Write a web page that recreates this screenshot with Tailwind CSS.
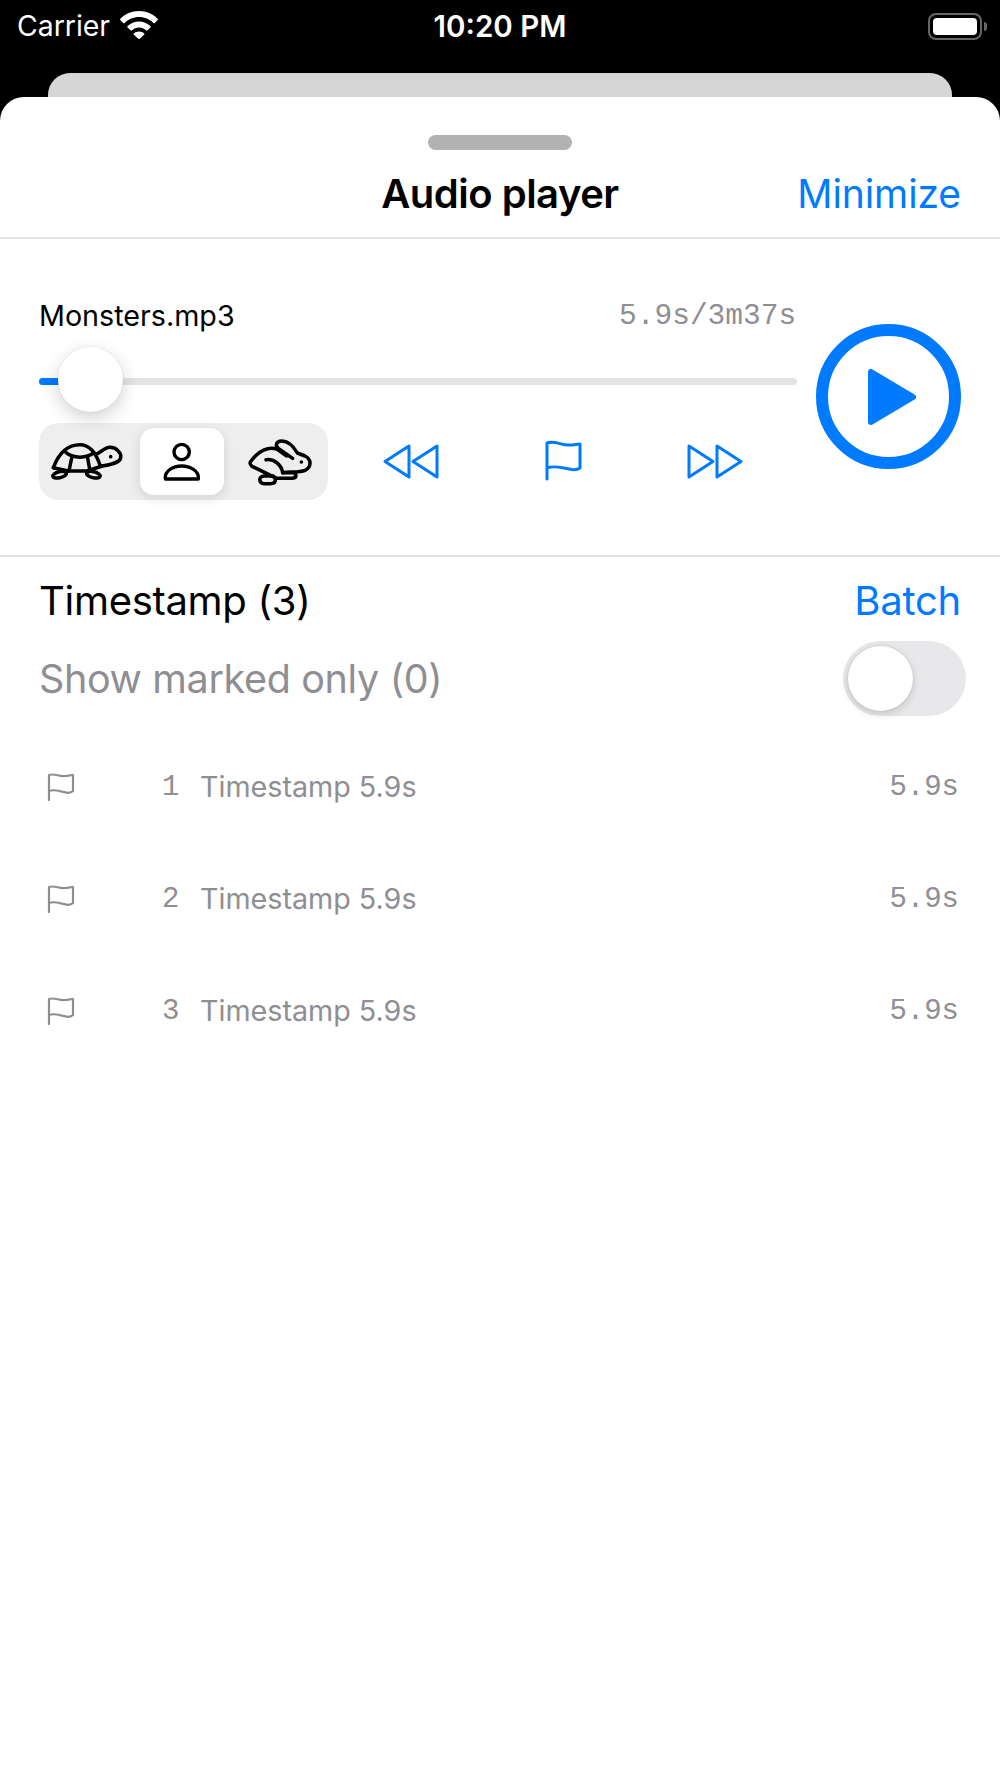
<!doctype html>
<html lang="en">
<head>
<meta charset="utf-8">
<title>Audio player</title>
<script src="https://cdn.jsdelivr.net/npm/@tailwindcss/browser@4"></script>
</head>
<body class="bg-black font-['Inter','Liberation_Sans',sans-serif]">
<div class="w-[1000px] h-[1778px] flex flex-col overflow-hidden bg-black">
  <div class="h-[97px] shrink-0 flex flex-col">
    <div class="h-[52px] flex items-center justify-between pl-[17px] pr-[13px] text-white relative">
      <div class="flex items-center gap-[10px]">
        <span class="text-[28.400px] leading-[52px]">Carrier</span>
        <svg class="w-[38px] h-[28px] mt-[-2px]" viewBox="0 0 38 28" fill="#fff"><path d="M19 0C11.6 0 5 3 .4 7.7a1 1 0 0 0 0 1.4l2.8 2.8a1 1 0 0 0 1.4 0C8.3 8.300 13.400 6 19 6s10.700 2.300 14.400 5.900a1 1 0 0 0 1.400 0l2.800-2.800a1 1 0 0 0 0-1.400C33 3 26.400 0 19 0Z"/><path d="M19 10.500c-4.400 0-8.400 1.700-11.400 4.600a1 1 0 0 0 0 1.400l2.900 2.800a1 1 0 0 0 1.400 0c1.900-1.700 4.400-2.800 7.100-2.800s5.200 1.100 7.100 2.800a1 1 0 0 0 1.400 0l2.900-2.800a1 1 0 0 0 0-1.400c-3-2.900-7-4.600-11.400-4.600Z"/><path d="M19 20.500c-2 0-3.800.7-5.100 1.900a1 1 0 0 0 0 1.400l4.400 4a1 1 0 0 0 1.400 0l4.400-4a1 1 0 0 0 0-1.400c-1.300-1.200-3.100-1.900-5.100-1.900Z"/></svg>
      </div>
      <span class="absolute left-[400px] w-[200px] text-center text-[29.500px] font-semibold leading-[54px] whitespace-nowrap">10:20 PM</span>
      <div class="flex items-center gap-[2px]">
        <div class="w-[54px] h-[27px] rounded-[8px] border-2 border-white/40 p-[3px]"><div class="h-full bg-white rounded-[4px]"></div></div>
        <div class="w-[3px] h-[9px] rounded-r-full bg-white/40"></div>
      </div>
    </div>
    <div class="mt-[21px] mx-[48px] h-[24px] bg-[#d6d6d6] rounded-t-[22px]"></div>
  </div>

  <div class="flex-1 bg-white rounded-t-[24px] flex flex-col">
    <div class="pt-[38px] flex justify-center"><div class="w-[144px] h-[15px] rounded-full bg-[#b2b2b2]"></div></div>
    <div class="h-[87px] grid grid-cols-[1fr_auto_1fr] items-center pl-[39px] pr-[39px] pt-[1px]">
      <div></div>
      <div class="text-[40px] font-semibold text-black tracking-[-0.5px]">Audio player</div>
      <div class="text-right text-[39px] text-[#007aff] tracking-[-0.1px]">Minimize</div>
    </div>
    <div class="h-[2px] bg-[#e3e3e5]"></div>

    <div class="h-[318px] flex pl-[39px] pr-[39px] border-b-2 border-[#e3e3e5]">
      <div class="w-[759px] flex flex-col">
        <div class="flex justify-between items-center pt-[57px] h-[96px] pr-[1px]">
          <span class="text-[28.700px] text-black">Monsters.mp3</span>
          <span class="relative top-[1px] text-[29.500px] text-[#8e8e93] font-['Liberation_Mono',monospace]">5.9s/3m37s</span>
        </div>
        <div class="relative h-[7px] mt-[43px] rounded-full bg-[#e4e4e6]">
          <div class="h-full w-[24px] rounded-l-full bg-[#007aff]"></div>
          <div class="absolute left-[19px] top-[-31px] w-[65px] h-[65px] rounded-full bg-white shadow-[0_6px_18px_rgba(0,0,0,0.18),0_0_2px_rgba(0,0,0,0.1)]"></div>
        </div>
        <div class="mt-[38px] flex items-center">
          <div class="w-[289px] h-[77px] rounded-[20px] bg-[#eeeeef] flex items-center">
            <div class="w-[101px] pl-[6px]">
              <svg class="block w-[80px] h-[50px] mt-[-2px]" viewBox="0 0 240 150" fill="none" stroke="#000" stroke-width="10.500" stroke-linecap="round" stroke-linejoin="round">
                <path d="M25 95C38 60 62 26 105 26C137 26 155 56 166 90"/>
                <path d="M25 95L70 105H125L172 90"/>
                <path d="M152 55C165 52 178 34 195 34C215 34 230 52 227 66C223 82 195 86 172 90"/>
                <path d="M63 50C85 68 125 68 147 50M80 66L72 105M128 66L135 105"/>
                <ellipse cx="44" cy="116" rx="21" ry="9" transform="rotate(-14 44 116)"/>
                <ellipse cx="145" cy="116" rx="21" ry="9" transform="rotate(14 145 116)"/>
                <circle cx="197" cy="62" r="5.500" fill="#000" stroke="none"/>
              </svg>
            </div>
            <div class="w-[84px] h-[67px] rounded-[14px] bg-white shadow-[0_3px_12px_rgba(0,0,0,0.12)] flex items-center justify-center">
              <svg class="w-[38px] h-[42px]" viewBox="432 305 114 126" fill="none" stroke="#000" stroke-width="10" stroke-linejoin="round">
                <circle cx="488" cy="338" r="23"/>
                <path d="M439 419C436 395 462 380 488 380C514 380 541 395 538 419Z"/>
              </svg>
            </div>
            <div class="w-[104px] pl-[16px]">
              <svg class="block w-[80px] h-[60px] mt-[-2px]" viewBox="0 0 240 180" fill="none" stroke="#000" stroke-width="10.500" stroke-linecap="round" stroke-linejoin="round">
                <path d="M112 55C85 45 55 60 35 88C27 95 30 100 36 106L75 125L110 142H155C172 142 172 125 155 125H128C125 105 105 82 78 86"/>
                <path d="M128 125C150 122 180 125 195 118C215 108 215 85 195 75L172 66C160 45 145 30 125 30C108 30 105 45 115 52L158 82"/>
                <path d="M112 55L140 75"/>
                <path d="M100 135H72C55 135 55 158 72 158H92C108 158 110 145 100 135"/>
                <circle cx="184" cy="93" r="5.500" fill="#000" stroke="none"/>
              </svg>
            </div>
          </div>
          <div class="ml-[55px] w-[57px] flex justify-center">
            <svg class="w-[57px] h-[35px] mt-[-1px]" viewBox="0 0 57 35" fill="none" stroke="#007aff" stroke-width="3" stroke-linejoin="round"><path d="M26 2V33L2 17.500Z"/><path d="M54 2V33L30 17.500Z"/></svg>
          </div>
          <div class="ml-[103px] w-[40px] flex justify-center">
            <svg class="w-[37px] h-[41px] mt-[-2px]" viewBox="0 0 37 41" fill="none" stroke="#007aff" stroke-width="3" stroke-linecap="round" stroke-linejoin="round"><path d="M2 39V3C10 0 17 6 25 5C29 5 32 4 35 4V28C32 30 28 30 24 29C17 28 9 25 2 28"/></svg>
          </div>
          <div class="ml-[103px] w-[57px] flex justify-center">
            <svg class="w-[57px] h-[35px] mt-[-1px]" viewBox="0 0 57 35" fill="none" stroke="#007aff" stroke-width="3" stroke-linejoin="round"><path d="M3 2V33L27 17.500Z"/><path d="M31 2V33L55 17.500Z"/></svg>
          </div>
        </div>
      </div>
      <div class="ml-[19px] mt-[85px] w-[145px] h-[145px] rounded-full border-[12px] border-[#007aff] flex items-center justify-center">
        <svg class="w-[48px] h-[56px] ml-[6px]" viewBox="0 0 48 56" fill="#007aff" stroke="#007aff" stroke-width="6" stroke-linejoin="round"><path d="M3 3V53L45 28Z"/></svg>
      </div>
    </div>

    <div class="pl-[39px] pr-[39px]">
      <div class="flex justify-between items-center h-[85px] pt-[2px]">
        <span class="text-[40px] text-black tracking-[-0.3px]">Timestamp (3)</span>
        <span class="text-[40px] text-[#007aff] tracking-[-0.2px]">Batch</span>
      </div>
      <div class="flex justify-between items-center h-[75px] mt-[-1px]">
        <span class="relative top-[1px] text-[39.500px] text-[#8e8e93] tracking-[-0.35px]">Show marked only (0)</span>
        <div class="relative left-[5px] w-[123px] h-[75px] rounded-full bg-[#e8e8ea] p-[5px]">
          <div class="w-[65px] h-[65px] rounded-full bg-white shadow-[0_3px_8px_rgba(0,0,0,0.15),0_0_2px_rgba(0,0,0,0.15)]"></div>
        </div>
      </div>
    </div>

    <div class="mt-[15px] pl-[47px] pr-[41px] flex flex-col">
      <div class="h-[112px] flex items-center text-[#8e8e93]">
        <svg class="w-[28px] h-[30px]" viewBox="0 0 28 30" fill="none" stroke="#8e8e93" stroke-width="2.200" stroke-linecap="round" stroke-linejoin="round"><path d="M2 28V3C8 1 12 5 18 4C21 4 24 3 26 3V19C24 21 20 21 17 20C12 19 7 17 2 19"/></svg>
        <span class="ml-[87px] w-[18px] font-['Liberation_Mono',monospace] text-[29px] relative top-[1px]">1</span>
        <span class="ml-[20px] flex-1 text-[28.700px]">Timestamp 5.9s</span>
        <span class="font-['Liberation_Mono',monospace] text-[29px] relative top-[1px]">5.9s</span>
      </div>
      <div class="h-[112px] flex items-center text-[#8e8e93]">
        <svg class="w-[28px] h-[30px]" viewBox="0 0 28 30" fill="none" stroke="#8e8e93" stroke-width="2.200" stroke-linecap="round" stroke-linejoin="round"><path d="M2 28V3C8 1 12 5 18 4C21 4 24 3 26 3V19C24 21 20 21 17 20C12 19 7 17 2 19"/></svg>
        <span class="ml-[87px] w-[18px] font-['Liberation_Mono',monospace] text-[29px] relative top-[1px]">2</span>
        <span class="ml-[20px] flex-1 text-[28.700px]">Timestamp 5.9s</span>
        <span class="font-['Liberation_Mono',monospace] text-[29px] relative top-[1px]">5.9s</span>
      </div>
      <div class="h-[112px] flex items-center text-[#8e8e93]">
        <svg class="w-[28px] h-[30px]" viewBox="0 0 28 30" fill="none" stroke="#8e8e93" stroke-width="2.200" stroke-linecap="round" stroke-linejoin="round"><path d="M2 28V3C8 1 12 5 18 4C21 4 24 3 26 3V19C24 21 20 21 17 20C12 19 7 17 2 19"/></svg>
        <span class="ml-[87px] w-[18px] font-['Liberation_Mono',monospace] text-[29px] relative top-[1px]">3</span>
        <span class="ml-[20px] flex-1 text-[28.700px]">Timestamp 5.9s</span>
        <span class="font-['Liberation_Mono',monospace] text-[29px] relative top-[1px]">5.9s</span>
      </div>
    </div>
  </div>
</div>
</body>
</html>
